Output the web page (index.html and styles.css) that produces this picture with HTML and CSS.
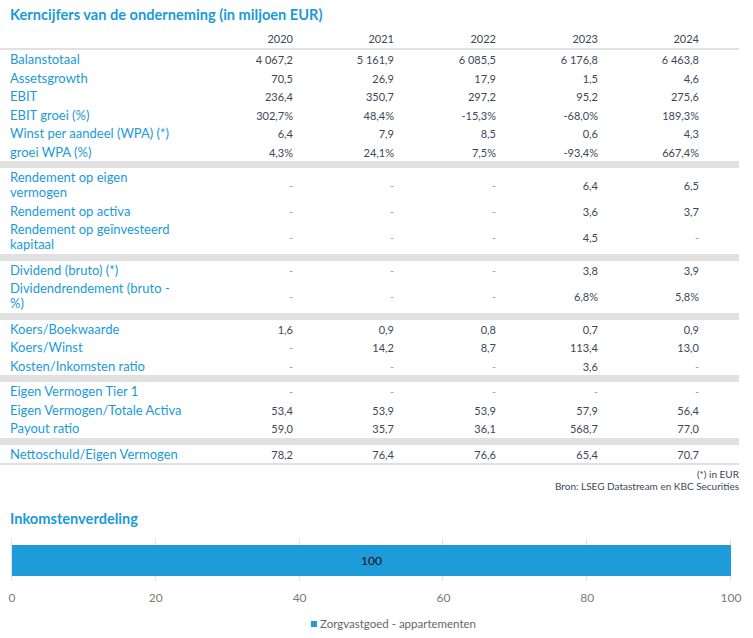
FILE: index.html
```html
<!DOCTYPE html>
<html lang="nl">
<head>
<meta charset="utf-8">
<title>Kerncijfers</title>
<link rel="stylesheet" href="styles.css">
</head>
<body>
<div class="page">
  <h1 class="title">Kerncijfers van de onderneming (in miljoen EUR)</h1>
  <table class="kc">
    <colgroup>
      <col class="c-label"><col class="c-a"><col class="c-a"><col class="c-b"><col class="c-b"><col class="c-a"><col class="c-end">
    </colgroup>
    <thead>
      <tr><th></th><th>2020</th><th>2021</th><th>2022</th><th>2023</th><th>2024</th><th></th></tr>
    </thead>
    <tbody>
      <tr><td class="lbl">Balanstotaal</td><td>4 067,2</td><td>5 161,9</td><td>6 085,5</td><td>6 176,8</td><td>6 463,8</td><td></td></tr>
      <tr><td class="lbl">Assetsgrowth</td><td>70,5</td><td>26,9</td><td>17,9</td><td>1,5</td><td>4,6</td><td></td></tr>
      <tr><td class="lbl">EBIT</td><td>236,4</td><td>350,7</td><td>297,2</td><td>95,2</td><td>275,6</td><td></td></tr>
      <tr><td class="lbl">EBIT groei (%)</td><td>302,7%</td><td>48,4%</td><td>-15,3%</td><td>-68,0%</td><td>189,3%</td><td></td></tr>
      <tr><td class="lbl">Winst per aandeel (WPA) (*)</td><td>6,4</td><td>7,9</td><td>8,5</td><td>0,6</td><td>4,3</td><td></td></tr>
      <tr><td class="lbl">groei WPA (%)</td><td>4,3%</td><td>24,1%</td><td>7,5%</td><td>-93,4%</td><td>667,4%</td><td></td></tr>
      <tr class="sep"><td colspan="7"></td></tr>
      <tr><td class="lbl">Rendement op eigen<br>vermogen</td><td class="na">-</td><td class="na">-</td><td class="na">-</td><td>6,4</td><td>6,5</td><td></td></tr>
      <tr><td class="lbl">Rendement op activa</td><td class="na">-</td><td class="na">-</td><td class="na">-</td><td>3,6</td><td>3,7</td><td></td></tr>
      <tr><td class="lbl">Rendement op geïnvesteerd<br>kapitaal</td><td class="na">-</td><td class="na">-</td><td class="na">-</td><td>4,5</td><td class="na">-</td><td></td></tr>
      <tr class="sep"><td colspan="7"></td></tr>
      <tr><td class="lbl">Dividend (bruto) (*)</td><td class="na">-</td><td class="na">-</td><td class="na">-</td><td>3,8</td><td>3,9</td><td></td></tr>
      <tr><td class="lbl">Dividendrendement (bruto -<br>%)</td><td class="na">-</td><td class="na">-</td><td class="na">-</td><td>6,8%</td><td>5,8%</td><td></td></tr>
      <tr class="sep"><td colspan="7"></td></tr>
      <tr><td class="lbl">Koers/Boekwaarde</td><td>1,6</td><td>0,9</td><td>0,8</td><td>0,7</td><td>0,9</td><td></td></tr>
      <tr><td class="lbl">Koers/Winst</td><td class="na">-</td><td>14,2</td><td>8,7</td><td>113,4</td><td>13,0</td><td></td></tr>
      <tr><td class="lbl">Kosten/Inkomsten ratio</td><td class="na">-</td><td class="na">-</td><td class="na">-</td><td>3,6</td><td class="na">-</td><td></td></tr>
      <tr class="sep"><td colspan="7"></td></tr>
      <tr><td class="lbl">Eigen Vermogen Tier 1</td><td class="na">-</td><td class="na">-</td><td class="na">-</td><td class="na">-</td><td class="na">-</td><td></td></tr>
      <tr><td class="lbl">Eigen Vermogen/Totale Activa</td><td>53,4</td><td>53,9</td><td>53,9</td><td>57,9</td><td>56,4</td><td></td></tr>
      <tr><td class="lbl">Payout ratio</td><td>59,0</td><td>35,7</td><td>36,1</td><td>568,7</td><td>77,0</td><td></td></tr>
      <tr class="sep"><td colspan="7"></td></tr>
      <tr class="last"><td class="lbl">Nettoschuld/Eigen Vermogen</td><td>78,2</td><td>76,4</td><td>76,6</td><td>65,4</td><td>70,7</td><td></td></tr>
    </tbody>
  </table>
  <div class="notes">
    <p>(*) in EUR</p>
    <p>Bron: LSEG Datastream en KBC Securities</p>
  </div>

  <h2 class="title title-2">Inkomstenverdeling</h2>
  <div class="chart">
    <div class="plot">
      <span class="grid" style="left:0%"></span>
      <span class="grid" style="left:20%"></span>
      <span class="grid" style="left:40%"></span>
      <span class="grid" style="left:60%"></span>
      <span class="grid" style="left:80%"></span>
      <span class="grid" style="left:100%"></span>
      <div class="bar" style="width:100%"><span class="bar-val">100</span></div>
    </div>
    <div class="axis">
      <span class="tick" style="left:0%">0</span>
      <span class="tick" style="left:20%">20</span>
      <span class="tick" style="left:40%">40</span>
      <span class="tick" style="left:60%">60</span>
      <span class="tick" style="left:80%">80</span>
      <span class="tick" style="left:100%">100</span>
    </div>
  </div>
  <div class="legend"><span class="swatch"></span><span class="legend-text">Zorgvastgoed - appartementen</span></div>
</div>
</body>
</html>
```

FILE: styles.css
```css
html, body {
  margin: 0;
  padding: 0;
  background: #ffffff;
}

.page {
  width: 753px;
  font-family: Lato, "Open Sans", sans-serif;
  color: #3a4858;
}

.title {
  margin: 0;
  padding: 5px 0 0 10px;
  font-size: 14.6px;
  line-height: 20px;
  font-weight: 700;
  color: #1a9ad9;
}

.kc {
  width: 739px;
  table-layout: fixed;
  border-collapse: collapse;
  border-spacing: 0;
}

.c-label { width: 192px; }
.c-a { width: 101px; }
.c-b { width: 102px; }
.c-end { width: 40px; }

.kc th {
  padding: 6px 0 2px 0;
  font-size: 11px;
  line-height: 15px;
  font-weight: 400;
  text-align: right;
  color: #3a4858;
  border-bottom: 2px solid #e1e1e1;
}

.kc td {
  padding: 2.25px 0 1.25px 0;
  font-size: 11px;
  line-height: 15px;
  text-align: right;
  vertical-align: middle;
  white-space: nowrap;
  color: #3a4858;
}

.kc td.lbl {
  padding-left: 10px;
  text-align: left;
  font-size: 13px;
  color: #1a9ad9;
}

.kc td.na {
  color: #9aa1a8;
}

.kc tr.sep td {
  padding: 0;
  height: 7px;
  line-height: 0;
  font-size: 0;
  background: #e1e1e1;
}

.kc tr.last td {
  border-bottom: 2px solid #e1e1e1;
}

.notes {
  width: 739px;
  padding-top: 3px;
  text-align: right;
  font-size: 10px;
  line-height: 12px;
  color: #3a4858;
}

.notes p {
  margin: 0;
}

.title-2 {
  margin-top: 12px;
}

.chart {
  margin: 9px 0 0 12px;
  width: 719px;
}

.plot {
  position: relative;
  height: 43px;
  padding-top: 7px;
  box-sizing: border-box;
}

.grid {
  position: absolute;
  top: 0;
  bottom: 0;
  width: 1px;
  margin-left: -1px;
  background: #e2e2e2;
}

.bar {
  position: relative;
  z-index: 1;
  height: 31px;
  background: #1e9bd9;
  display: flex;
  align-items: center;
  justify-content: center;
}

.bar-val {
  font-size: 12px;
  color: #111111;
}

.axis {
  position: relative;
  height: 14px;
  margin-top: 10px;
}

.tick {
  position: absolute;
  top: 0;
  transform: translateX(-50%);
  font-size: 12px;
  line-height: 14px;
  color: #7a7a7a;
}

.legend {
  display: flex;
  align-items: center;
  gap: 3px;
  margin: 12px 0 0 311px;
  font-size: 11.5px;
  line-height: 14px;
  color: #666666;
}

.swatch {
  width: 6px;
  height: 6px;
  background: #1e9bd9;
}
```
